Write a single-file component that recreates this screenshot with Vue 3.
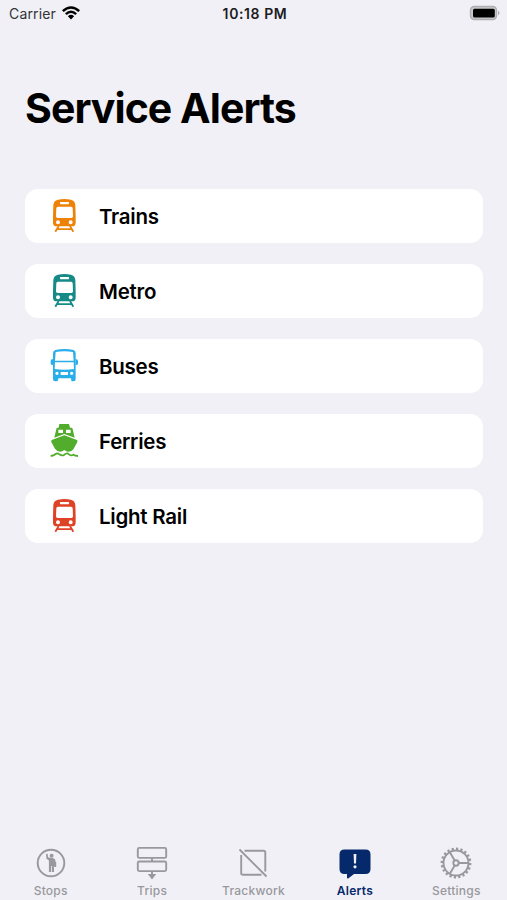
<template>
  <div class="screen">
    <header class="status-bar">
      <div class="carrier">
        <span>Carrier</span>
        <svg class="wifi" viewBox="0 0 18 14">
          <path d="M0 4.2Q9-3.6 18 4.2L16.3 6Q9-.6 1.700 6Z" />
          <path d="M3 7.300Q9 1.900 15 7.300L13.300 9Q9 5 4.700 9Z" />
          <path d="M5.900 10.200Q9 7.500 12.100 10.200L9 13.400Z" />
        </svg>
      </div>
      <span class="clock">10:18 PM</span>
      <svg class="battery" viewBox="0 0 32 16">
        <rect x="1.500" y="1.500" width="26" height="13" rx="3.800" fill="#c9c9cc" stroke="#aeaeb2" stroke-width="1.400" />
        <rect x="4" y="3.700" width="21.800" height="8.800" rx="1.500" />
        <path d="M29 5.500Q32 8 29 10.500Z" fill="#aeaeb2" />
      </svg>
    </header>

    <h1 class="title">Service Alerts</h1>

    <main class="modes">
      <button v-for="mode in modes" :key="mode.name" class="mode" :class="mode.color">
        <svg class="mode-icon" viewBox="0 0 150 150">
          <template v-if="mode.icon === 'train'">
            <path
              fill-rule="evenodd"
              d="M54 29Q73 25 93 29Q105 32 106 45L107 82V98Q107 109 96 109H50Q39 109 39 98V82L40 45Q41 32 54 29ZM54 50Q49 50 49 55L48 79Q48 84 53 84H94Q99 84 99 79L98 55Q98 50 93 50ZM61 36Q58 39 61 43H86Q89 39 86 36ZM54 91A6 6 0 1 0 54 103A6 6 0 1 0 54 91ZM92 91A6 6 0 1 0 92 103A6 6 0 1 0 92 91Z"
            />
            <path class="line" d="M56 108L46 125M90 108L100 125M52 117.500H94" />
          </template>
          <template v-else-if="mode.icon === 'bus'">
            <path
              fill-rule="evenodd"
              d="M46 30Q73 24 101 30Q107 32 107 40V117Q107 124 101 124H97Q93 124 93 115H55Q55 124 50 124H45Q39 124 39 117V40Q39 32 46 30ZM47 36L45 62H101L99 36Q73 32 47 36ZM45 67L44 87Q73 91 102 87L101 67ZM51 95A5 5 0 1 0 51 105A5 5 0 1 0 51 95ZM95 95A5 5 0 1 0 95 105A5 5 0 1 0 95 95ZM62 96V105H84V96Z"
            />
            <path d="M39 57Q32 57 32 63V72Q32 75 39 75ZM107 57Q114 57 114 63V72Q114 75 107 75Z" />
          </template>
          <template v-else>
            <path
              fill-rule="evenodd"
              d="M58 27H87L90 38H94Q97 38 98 42L104 68L73 57L43 68L49 42Q50 38 53 38H56ZM55 44V54H69V44ZM78 44V54H92V44Z"
            />
            <path d="M73 61L109 74Q115 76 112 81L101 101Q96 110 84 110Q79 110 73 105Q67 110 61 110Q50 109 45 101L34 81Q31 76 37 74Z" />
            <path class="wave" d="M32 123Q41 122 47 117Q52 113 58 118Q66 124 73 119Q81 112 87 118Q94 124 100 119Q105 122 114 123" />
          </template>
        </svg>
        <span>{{ mode.name }}</span>
      </button>
    </main>

    <nav class="tabs">
      <a v-for="tab in tabs" :key="tab" class="tab" :class="{ active: tab === 'Alerts' }">
        <svg class="tab-icon" viewBox="0 0 36 36">
          <template v-if="tab === 'Stops'">
            <circle class="stroke" cx="18" cy="18" r="13.300" />
            <circle class="solid" cx="18.600" cy="10.800" r="2" />
            <path class="solid" d="M13 9L14.600 8.700L15.200 12.400L20.500 13.200Q22.500 13.600 22.500 16V21.500H21V27H18.800V21H18V27H15.900V15.500L13.500 13.800Z" />
            <path class="solid" d="M21.500 17H23.200V22H21.500Z" />
          </template>
          <template v-else-if="tab === 'Trips'">
            <rect class="stroke" x="3.800" y="2.900" width="28.400" height="10" rx="1.500" />
            <rect class="stroke" x="3.800" y="16.500" width="28.400" height="9.600" rx="1.500" />
            <path class="stroke" d="M18 13V16.500M18 26V30" />
            <path class="solid" d="M13.800 29H22.200L18 34.500Z" />
          </template>
          <template v-else-if="tab === 'Trackwork'">
            <path class="stroke" d="M9.500 5.800H28.500Q30.300 5.800 30.300 7.600V26.500M26.500 29.800H8Q6.200 29.800 6.200 28V10M4.500 4.500L31.500 31.500" />
          </template>
          <template v-else-if="tab === 'Alerts'">
            <path class="solid" d="M7.500 4.500H28.500Q33.500 4.500 33.500 9.500V24Q33.500 29 28.500 29H17L11.500 33.300Q10 34 10 32.300V29H7.500Q2.500 29 2.500 24V9.500Q2.500 4.500 7.500 4.500Z" />
            <path class="mark" d="M16.600 9H19.400L19 18.500H17Z" />
            <circle class="mark" cx="18" cy="21.800" r="1.600" />
          </template>
          <template v-else>
            <circle class="stroke" cx="18" cy="18" r="12.500" />
            <circle class="teeth" cx="18" cy="18" r="14.200" pathLength="180" />
            <circle class="stroke" cx="18" cy="18" r="2.700" />
            <path class="stroke" d="M20.700 18H30M16.700 15.600L11.800 7.300M16.700 20.400L11.800 28.700" />
          </template>
        </svg>
        <span class="tab-label">{{ tab }}</span>
      </a>
    </nav>
  </div>
</template>

<script setup>
const modes = [
  { name: 'Trains', icon: 'train', color: 'orange' },
  { name: 'Metro', icon: 'train', color: 'teal' },
  { name: 'Buses', icon: 'bus', color: 'blue' },
  { name: 'Ferries', icon: 'ferry', color: 'green' },
  { name: 'Light Rail', icon: 'train', color: 'red' },
];

const tabs = ['Stops', 'Trips', 'Trackwork', 'Alerts', 'Settings'];
</script>

<style>
body {
  background: #f1f0f6;
}
</style>

<style scoped>
.screen {
  display: flex;
  flex-direction: column;
  height: 100vh;
  overflow: hidden;
  background: #f1f0f6;
  color: #000;
  font-family: Inter, sans-serif;
}

.status-bar {
  display: grid;
  grid-template-columns: 1fr auto 1fr;
  align-items: center;
  height: 26px;
  padding: 0 6px 0 9px;
  font-size: 14px;
}

.carrier {
  display: flex;
  align-items: center;
  gap: 6px;
  color: #333336;
  letter-spacing: 0.15px;
}

.wifi {
  width: 18px;
  height: 14px;
  fill: #000;
}

.clock {
  font-weight: 600;
  color: #1c1c1e;
  letter-spacing: 0.6px;
}

.battery {
  justify-self: end;
  width: 32px;
  height: 16px;
}

.title {
  margin: 58px 25px 0;
  height: 48px;
  line-height: 48px;
  font-size: 41px;
  font-weight: 700;
  letter-spacing: -0.93px;
  white-space: nowrap;
}

.modes {
  display: flex;
  flex-direction: column;
  gap: 21px;
  margin: 57px 24px 0 25px;
}

.mode {
  display: flex;
  align-items: center;
  gap: 9px;
  height: 54px;
  padding: 0 15px;
  border: 0;
  border-radius: 13px;
  background: #fff;
  font: 600 20.5px Inter, sans-serif;
  letter-spacing: -0.25px;
  color: #000;
}

.mode-icon {
  width: 50px;
  height: 50px;
  margin-top: -2px;
  fill: currentColor;
}

.orange .mode-icon { color: #ee8208; }
.teal .mode-icon { color: #168a86; }
.blue .mode-icon { color: #2aaeea; }
.green .mode-icon { color: #51ad2b; }
.red .mode-icon { color: #df4325; }

.line,
.wave {
  fill: none;
  stroke: currentColor;
  stroke-width: 5.5;
}

.tabs {
  display: grid;
  grid-template-columns: repeat(5, 1fr);
  margin-top: auto;
  height: 55px;
}

.tab {
  display: flex;
  flex-direction: column;
  align-items: center;
  color: #98989d;
}

.active {
  color: #05296b;
}

.tab-icon {
  width: 36px;
  height: 36px;
}

.stroke,
.teeth {
  fill: none;
  stroke: currentColor;
  stroke-width: 1.9;
}

.teeth {
  stroke-width: 2.4;
  stroke-dasharray: 4.5 4.5;
}

.solid {
  fill: currentColor;
}

.mark {
  fill: #f1f0f6;
}

.tab-label {
  margin-top: 2px;
  font-size: 12px;
  line-height: 16px;
  font-weight: 500;
  letter-spacing: 0.25px;
}

.active .tab-label {
  font-weight: 600;
}
</style>
